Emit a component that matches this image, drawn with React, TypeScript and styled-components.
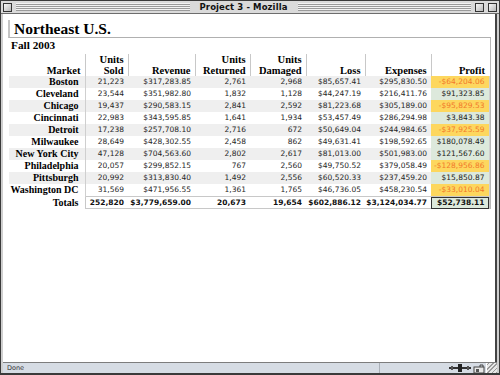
import styled, { createGlobalStyle } from "styled-components";

const GlobalStyle = createGlobalStyle`
  html, body { margin: 0; padding: 0; background: #fff; }
  body { width: 500px; height: 375px; overflow: hidden; }
`;

interface Row {
  market: string;
  sold: string;
  revenue: string;
  returned: string;
  damaged: string;
  loss: string;
  expenses: string;
  profit: string;
}

const rows: Row[] = [
  { market: "Boston", sold: "21,223", revenue: "$317,283.85", returned: "2,761", damaged: "2,968", loss: "$85,657.41", expenses: "$295,830.50", profit: "-$64,204.06" },
  { market: "Cleveland", sold: "23,544", revenue: "$351,982.80", returned: "1,832", damaged: "1,128", loss: "$44,247.19", expenses: "$216,411.76", profit: "$91,323.85" },
  { market: "Chicago", sold: "19,437", revenue: "$290,583.15", returned: "2,841", damaged: "2,592", loss: "$81,223.68", expenses: "$305,189.00", profit: "-$95,829.53" },
  { market: "Cincinnati", sold: "22,983", revenue: "$343,595.85", returned: "1,641", damaged: "1,934", loss: "$53,457.49", expenses: "$286,294.98", profit: "$3,843.38" },
  { market: "Detroit", sold: "17,238", revenue: "$257,708.10", returned: "2,716", damaged: "672", loss: "$50,649.04", expenses: "$244,984.65", profit: "-$37,925.59" },
  { market: "Milwaukee", sold: "28,649", revenue: "$428,302.55", returned: "2,458", damaged: "862", loss: "$49,631.41", expenses: "$198,592.65", profit: "$180,078.49" },
  { market: "New York City", sold: "47,128", revenue: "$704,563.60", returned: "2,802", damaged: "2,617", loss: "$81,013.00", expenses: "$501,983.00", profit: "$121,567.60" },
  { market: "Philadelphia", sold: "20,057", revenue: "$299,852.15", returned: "767", damaged: "2,560", loss: "$49,750.52", expenses: "$379,058.49", profit: "-$128,956.86" },
  { market: "Pittsburgh", sold: "20,992", revenue: "$313,830.40", returned: "1,492", damaged: "2,556", loss: "$60,520.33", expenses: "$237,459.20", profit: "$15,850.87" },
  { market: "Washington DC", sold: "31,569", revenue: "$471,956.55", returned: "1,361", damaged: "1,765", loss: "$46,736.05", expenses: "$458,230.54", profit: "-$33,010.04" },
];

const columnWidths = [76, 43, 67, 55, 56, 59, 66, 58];

/* ── window chrome ── */

const Window = styled.div`
  width: 500px;
  height: 375px;
  box-sizing: border-box;
  display: grid;
  grid-template-rows: 13px 1fr 11px;
  background: #cfcfcf;
  border: 1px solid #3a3a3a;
  border-bottom-width: 2px;
  font-family: "DejaVu Sans", sans-serif;
`;

const TitleBar = styled.div`
  display: flex;
  align-items: center;
  gap: 4px;
  padding: 0 2px;
  border-bottom: 1px solid #6d6d6d;
  background-color: #dadada;
`;

const Stripes = styled.div`
  flex: 1;
  align-self: stretch;
  margin: 2px 0;
  background: repeating-linear-gradient(
    to bottom,
    #f2f2f2 0px,
    #f2f2f2 1px,
    #9a9a9a 1px,
    #9a9a9a 2px
  );
`;

const TitleText = styled.div`
  padding: 0 6px;
  font-family: "DejaVu Sans", sans-serif;
  font-size: 8.5px;
  font-weight: bold;
  color: #111;
  align-self: stretch;
  display: flex;
  align-items: center;
  letter-spacing: 0.1px;
`;

const TitleBox = styled.div`
  width: 7px;
  height: 7px;
  border: 1px solid #333;
  background: linear-gradient(135deg, #f8f8f8, #b8b8b8);
  flex-shrink: 0;
`;

const Body = styled.div`
  display: flex;
  background: #fff;
  margin: 0 2px;
  border-right: 2px solid #444;
  overflow: hidden;
`;

const Page = styled.div`
  flex: 1;
  padding: 6px 4px 0 5px;
  color: #000;
  font-family: "Liberation Serif", "Times New Roman", serif;
`;

const Heading = styled.h1`
  margin: 0;
  padding: 1px 0 0 4px;
  font-size: 15.5px;
  font-weight: bold;
  line-height: 16px;
  border-left: 2px solid #c4c4c4;
  border-bottom: 1px solid #b0b0b0;
`;

const Section = styled.div`
  border-right: 1px solid #b8b8b8;
  padding: 1px 0 0 3px;
`;

const Subheading = styled.h2`
  margin: 0 0 2px 0;
  font-size: 11.3px;
  font-weight: bold;
  line-height: 13px;
`;

/* ── table ── */

const Table = styled.table`
  border-collapse: collapse;
  table-layout: fixed;
  width: 480px;
  margin-left: -2px;
`;

const HeadCell = styled.th<{ $first?: boolean }>`
  font-family: "Liberation Serif", "Times New Roman", serif;
  font-size: 10.5px;
  font-weight: bold;
  text-align: right;
  vertical-align: bottom;
  line-height: 11px;
  padding: 0 4px 0 0;
  height: 21px;
  border-left: ${(p) => (p.$first ? "none" : "1px solid #c8c8c8")};
`;

const BodyRow = styled.tr<{ $shaded: boolean }>`
  background: ${(p) => (p.$shaded ? "#efefef" : "#fff")};
  height: 12px;
`;

const MarketCell = styled.th`
  font-family: "Liberation Serif", "Times New Roman", serif;
  font-size: 10px;
  font-weight: bold;
  text-align: right;
  padding: 0 6px 0 0;
  line-height: 12px;
  white-space: nowrap;
`;

const DataCell = styled.td<{ $edge?: boolean }>`
  font-family: "DejaVu Sans", Verdana, sans-serif;
  font-size: 7.5px;
  color: #262626;
  text-align: right;
  padding: 0 4px 0 0;
  line-height: 12px;
  white-space: nowrap;
  border-left: ${(p) => (p.$edge ? "1px solid #cfcfcf" : "none")};
`;

const ProfitCell = styled.td<{ $loss: boolean }>`
  font-family: "DejaVu Sans", Verdana, sans-serif;
  font-size: 7.5px;
  text-align: right;
  padding: 0 4px 0 0;
  line-height: 12px;
  white-space: nowrap;
  color: ${(p) => (p.$loss ? "#f2792b" : "#1a1a1a")};
  background: ${(p) => (p.$loss ? "#fdd75e" : "#dde9dc")};
  border-right: 1px solid #cfcfcf;
`;

const TotalsRow = styled.tr`
  height: 12px;
`;

const TotalCell = styled.td<{ $profit?: boolean; $edge?: boolean }>`
  font-family: "DejaVu Sans", Verdana, sans-serif;
  font-size: 7.5px;
  font-weight: bold;
  text-align: right;
  padding: 0 4px 0 0;
  line-height: 11px;
  white-space: nowrap;
  color: #111;
  border-top: 1px solid #c8c8c8;
  border-bottom: 1px solid #c8c8c8;
  border-left: ${(p) => (p.$edge ? "1px solid #c8c8c8" : "none")};
  ${(p) =>
    p.$profit &&
    `
    background: #dde9dc;
    outline: 1px solid #333;
    outline-offset: -1px;
    border-right: 1px solid #c8c8c8;
  `}
`;

/* ── status bar ── */

const StatusBar = styled.div`
  display: flex;
  align-items: stretch;
  margin: 0 2px;
  background: #d6dce4;
  border-top: 1px solid #7d7d7d;
  font-family: "DejaVu Sans", sans-serif;
  font-size: 6.5px;
  color: #333;
`;

const StatusText = styled.div`
  width: 372px;
  padding-left: 4px;
  display: flex;
  align-items: center;
  border-right: 1px solid #aab0b8;
`;

const StatusIcons = styled.div`
  flex: 1;
  display: flex;
  justify-content: flex-end;
  align-items: center;
  gap: 2px;
  padding-right: 1px;
`;

const Grip = styled.div`
  width: 10px;
  align-self: stretch;
  background: repeating-linear-gradient(135deg, #e8e8e8 0 1px, #9a9a9a 1px 2px, #e8e8e8 2px 3px);
  border-left: 1px solid #fff;
`;

const ProgressIcon = () => (
  <svg width="22" height="8" viewBox="0 0 22 8">
    <rect x="0" y="3" width="22" height="2" fill="#333" />
    <rect x="9" y="0" width="4" height="8" fill="#222" />
    <rect x="2" y="2" width="2" height="4" fill="#555" />
    <rect x="18" y="2" width="2" height="4" fill="#555" />
  </svg>
);

const LockIcon = () => (
  <svg width="12" height="9" viewBox="0 0 12 9">
    <rect x="1" y="3" width="10" height="6" fill="#e8e8e8" stroke="#444" strokeWidth="1" />
    <rect x="3" y="5" width="3" height="3" fill="#555" />
    <path d="M7 3 V1 H10 V3" fill="none" stroke="#444" />
  </svg>
);

const headers: [string, string][] = [
  ["", "Market"],
  ["Units", "Sold"],
  ["", "Revenue"],
  ["Units", "Returned"],
  ["Units", "Damaged"],
  ["", "Loss"],
  ["", "Expenses"],
  ["", "Profit"],
];

const App = () => (
  <>
    <GlobalStyle />
    <Window>
      <TitleBar>
        <TitleBox />
        <Stripes />
        <TitleText>Project 3 - Mozilla</TitleText>
        <Stripes />
        <TitleBox />
        <TitleBox />
      </TitleBar>
      <Body>
        <Page>
          <Heading>Northeast U.S.</Heading>
          <Section>
            <Subheading>Fall 2003</Subheading>
            <Table>
              <colgroup>
                {columnWidths.map((w, i) => (
                  <col key={i} style={{ width: w }} />
                ))}
              </colgroup>
              <thead>
                <tr>
                  {headers.map(([top, bottom], i) => (
                    <HeadCell key={bottom} $first={i === 0}>
                      {top && (
                        <>
                          {top}
                          <br />
                        </>
                      )}
                      {bottom}
                    </HeadCell>
                  ))}
                </tr>
              </thead>
              <tbody>
                {rows.map((r, i) => (
                  <BodyRow key={r.market} $shaded={i % 2 === 0}>
                    <MarketCell>{r.market}</MarketCell>
                    <DataCell $edge>{r.sold}</DataCell>
                    <DataCell>{r.revenue}</DataCell>
                    <DataCell>{r.returned}</DataCell>
                    <DataCell>{r.damaged}</DataCell>
                    <DataCell>{r.loss}</DataCell>
                    <DataCell>{r.expenses}</DataCell>
                    <ProfitCell $loss={r.profit.startsWith("-")}>{r.profit}</ProfitCell>
                  </BodyRow>
                ))}
                <TotalsRow>
                  <MarketCell>Totals</MarketCell>
                  <TotalCell $edge>252,820</TotalCell>
                  <TotalCell>$3,779,659.00</TotalCell>
                  <TotalCell>20,673</TotalCell>
                  <TotalCell>19,654</TotalCell>
                  <TotalCell>$602,886.12</TotalCell>
                  <TotalCell>$3,124,034.77</TotalCell>
                  <TotalCell $profit>$52,738.11</TotalCell>
                </TotalsRow>
              </tbody>
            </Table>
          </Section>
        </Page>
      </Body>
      <StatusBar>
        <StatusText>Done</StatusText>
        <StatusIcons>
          <ProgressIcon />
          <LockIcon />
        </StatusIcons>
        <Grip />
      </StatusBar>
    </Window>
  </>
);

export default App;
